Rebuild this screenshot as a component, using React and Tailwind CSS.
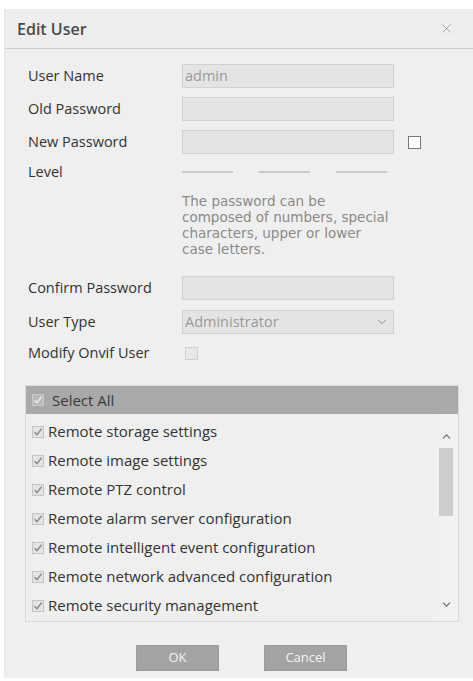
import { ChevronDown, ChevronUp, X } from "lucide-react"

const font = { fontFamily: '"Open Sans", "Noto Sans", sans-serif' }
const hintFont = { fontFamily: '"DejaVu Sans", "Open Sans", sans-serif' }

// small checked box used in the permission list
function Tick({ dark }) {
  return (
    <svg width="12" height="12" viewBox="0 0 12 12" className="shrink-0">
      <rect x="0.5" y="0.5" width="11" height="11" fill={dark ? "#b9b9b9" : "#e4e4e4"} stroke={dark ? "#c9c9c9" : "#c4c4c4"} />
      <path d="M2.5 6.2 L5 8.6 L9.6 2.8" fill="none" stroke={dark ? "#ececec" : "#8a8a8a"} strokeWidth="1.4" />
    </svg>
  )
}

const perms = [
  "Remote storage settings",
  "Remote image settings",
  "Remote PTZ control",
  "Remote alarm server configuration",
  "Remote intelligent event configuration",
  "Remote network advanced configuration",
  "Remote security management",
]

function Field({ label, value, extra, className = "" }) {
  return (
    <div className={"flex items-center h-[24px] " + className}>
      <div className="w-[154px] text-[14.5px] text-[#333]">{label}</div>
      <div className="w-[212px] h-[24px] bg-[#e4e4e4] border border-[#d2d2d2] px-[2px] flex items-center text-[14.5px] text-[#9a9a9a]">{value}</div>
      {extra}
    </div>
  )
}

function App() {
  return (
    <div className="w-[473px] h-[681px] bg-white pt-[9px] pl-[4px] overflow-hidden" style={font}>
      <div className="w-[469px] h-[669px] bg-[#efefef] border-l border-[#e6e6e6] flex flex-col">
        {/* header */}
        <div className="h-[40px] flex items-center justify-between px-[12px] border-b border-[#cdcdcd] bg-[#eeeeee]">
          <span className="text-[16px] font-semibold text-[#4a4a4a]">Edit User</span>
          <X size={15} strokeWidth={1.4} className="text-[#9d9d9d] mr-[7px]" />
        </div>

        <div className="pl-[23px] pt-[15px] flex flex-col">
          <Field label="User Name" value="admin" />
          <Field label="Old Password" className="mt-[9px]" />
          <Field
            label="New Password"
            className="mt-[9px]"
            extra={<div className="ml-[14px] w-[13px] h-[13px] bg-white border border-[#777]" />}
          />
          <div className="flex items-center h-[20px] mt-[8px]">
            <div className="w-[154px] text-[14.5px] text-[#333]">Level</div>
            <div className="flex gap-[26px]">
              <div className="w-[51px] h-[2px] bg-[#c8c8c8]" />
              <div className="w-[51px] h-[2px] bg-[#c8c8c8]" />
              <div className="w-[51px] h-[2px] bg-[#c8c8c8]" />
            </div>
          </div>
          <div className="ml-[154px] mt-[11px] text-[13.5px] leading-[16px] text-[#8a8a8a] whitespace-nowrap" style={hintFont}>
            The password can be<br />
            composed of numbers, special<br />
            characters, upper or lower<br />
            case letters.
          </div>
          <Field label="Confirm Password" className="mt-[19px]" />
          <div className="flex items-center h-[24px] mt-[10px]">
            <div className="w-[154px] text-[14.5px] text-[#333]">User Type</div>
            <div className="w-[212px] h-[24px] bg-[#e4e4e4] border border-[#d2d2d2] pl-[2px] pr-[4px] flex items-center justify-between text-[14.5px] text-[#9a9a9a]">
              <span>Administrator</span>
              <ChevronDown size={14} strokeWidth={1.6} className="text-[#8a8a8a]" />
            </div>
          </div>
          <div className="flex items-center h-[20px] mt-[9px]">
            <div className="w-[157px] text-[14.5px] text-[#333]">Modify Onvif User</div>
            <div className="w-[13px] h-[13px] bg-[#e8e8e8] border border-[#d0d0d0]" />
          </div>
        </div>

        {/* permissions list */}
        <div className="ml-[20px] mt-[22px] w-[434px] h-[237px] border border-[#dadada] flex flex-col">
          <div className="h-[28px] bg-[#a9a9a9] flex items-center pl-[6px] gap-[8px] text-[15px] text-[#3a3a3a]">
            <Tick dark />
            <span>Select All</span>
          </div>
          <div className="flex flex-1">
            <div className="flex-1 pt-[3px] pl-[6px]">
              {perms.map((p) => (
                <div key={p} className="h-[29px] flex items-center gap-[4px] text-[15px] text-[#333]">
                  <Tick />
                  <span>{p}</span>
                </div>
              ))}
            </div>
            <div className="w-[24px] bg-[#f1f1f1] flex flex-col items-center pt-[16px] pb-[10px]">
              <ChevronUp size={13} strokeWidth={2} className="text-[#666]" />
              <div className="mt-[5px] w-[14px] h-[68px] bg-[#cdcdcd]" />
              <div className="flex-1" />
              <ChevronDown size={13} strokeWidth={2} className="text-[#666]" />
            </div>
          </div>
        </div>

        {/* buttons */}
        <div className="mt-[23px] flex justify-center gap-[45px] pl-[5px]">
          <button className="w-[83px] h-[26px] bg-[#a3a3a3] border border-[#9a9a9a] text-[13px] text-[#f4f4f4]">OK</button>
          <button className="w-[83px] h-[26px] bg-[#a3a3a3] border border-[#9a9a9a] text-[13px] text-[#f4f4f4]">Cancel</button>
        </div>
      </div>
    </div>
  )
}

export default App
